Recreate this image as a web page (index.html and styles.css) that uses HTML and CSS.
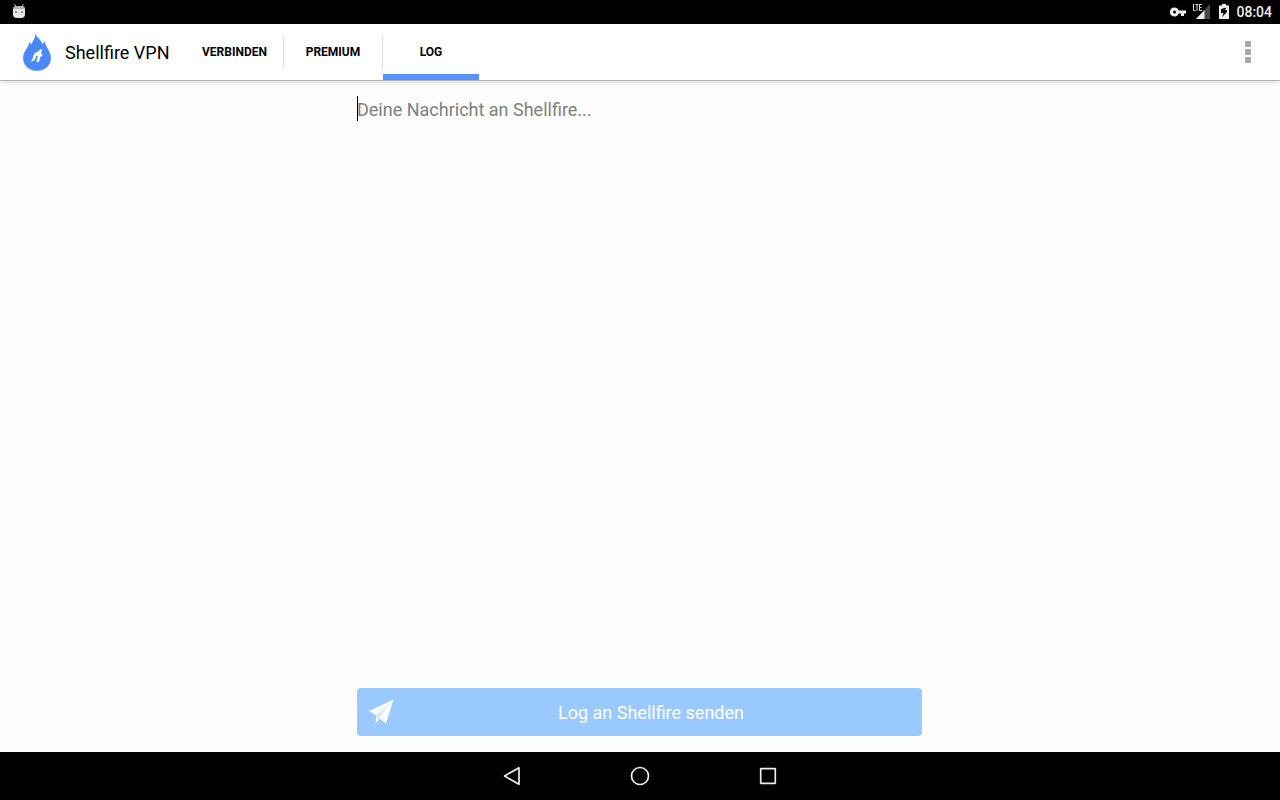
FILE: index.html
```html
<!DOCTYPE html>
<html lang="de">
<head>
<meta charset="utf-8">
<meta name="viewport" content="width=device-width, initial-scale=1">
<title>Shellfire VPN</title>
<link rel="stylesheet" href="styles.css">
</head>
<body>
<div class="status-bar">
  <svg class="status-icon" width="14" height="16" viewBox="0 0 14 16" aria-hidden="true">
    <path d="M2.6 1 4.2 4M11.4 1 9.8 4" stroke="#a8a8a8" stroke-width="1" fill="none"/>
    <path d="M1 6.2C1 4 2 3 4 3h6c2 0 3 1 3 3.200z" fill="#b4b4b4"/>
    <path d="M1 6h12v5.500c0 2-1.500 3.500-3.500 3.500h-5C2.500 15 1 13.500 1 11.500z" fill="#e6e6e6"/>
    <circle cx="4" cy="9" r=".8" fill="#222"/><circle cx="10" cy="9" r=".8" fill="#222"/>
  </svg>
  <div class="status-icons">
    <svg width="16" height="10" viewBox="0 0 16 10" aria-hidden="true">
      <path fill="#eee" fill-rule="evenodd" d="M4.500.5a4.500 4.500 0 1 0 4.200 6H11V9h3V6.500h2v-3H8.700A4.500 4.500 0 0 0 4.500.5zm0 3a1.500 1.500 0 1 1 0 3 1.500 1.500 0 0 1 0-3z"/>
    </svg>
    <svg class="status-icon" width="20" height="16" viewBox="0 0 20 16" aria-hidden="true">
      <path d="M18 1v15H4z" fill="#484848"/><path d="M12.500 7v9H4z" fill="#eee"/>
      <path d="M0 0h10.500v8.500H0z" fill="#000"/>
      <path d="M1.500 1v6.500h2M3.500 1.500h3M5 1.500V8M10 1.500H7.500v6H10M7.500 4.500h2" fill="none" stroke="#ddd" stroke-width="1"/>
    </svg>
    <svg class="status-icon" width="12" height="15" viewBox="0 0 12 15" aria-hidden="true">
      <path d="M4 0h4v1.500h3V15H1V1.500h3z" fill="#eee"/><path d="M8.500 3.500 3 5v4h2.500L4 13l5-5V6H7z" fill="#000"/>
    </svg>
    <time class="clock">08:04</time>
  </div>
</div>

<header class="action-bar">
  <svg class="logo" width="30" height="38" viewBox="0 0 30 38" aria-hidden="true">
    <path d="M13.500 1c-.5 5-3 7.200-4 10.500L7.300 8.300C7.300 14 1 17.500 1 24.500 1 32 7 37.300 15 37.300S29 32 29 24.500c0-7-5.600-10.500-6.300-17l-2.500 3.200C19.500 6 15.500 5 13.500 1z" fill="#b9c0cc"/>
    <path d="M13.500 0c-.5 5-3 7.200-4 10.500L7.300 7.800C7.300 13.500 1.300 17 1.300 23.500 1.300 31 7 36.500 15 36.500s13.700-5.500 13.700-13c0-7-5.300-10-6-16.300l-2.500 3.300C19.500 6 15.500 4.500 13.500 0z" fill="#4988fa"/>
    <path d="M8.300 27.500c1.700-.8 2.200-2 2.700-4.200.7-3.200 2-5.300 5-5.500 1-2 2.300-2.800 4.300-2.500l-.6 2-.7 2.900h1.500l-.6 2.200h-1.500L17 28h-2.800l1.600-6.200h-1.600c-.8 3.800-2.400 6.200-5.900 5.700z" fill="#fff"/>
  </svg>
  <h1 class="title">Shellfire VPN</h1>
  <nav class="tabs">
    <a class="tab" href="#verbinden">VERBINDEN</a>
    <a class="tab" href="#premium">PREMIUM</a>
    <a class="tab tab-active" href="#log" aria-current="page">LOG</a>
  </nav>
  <button class="overflow" type="button" aria-label="Weitere Optionen">
    <svg width="6" height="22" viewBox="0 0 6 22" aria-hidden="true"><path d="M0 0h6v6H0zM0 8h6v6H0zM0 16h6v6H0z" fill="#aaa"/></svg>
  </button>
</header>

<main class="content">
  <form class="log-form">
    <div class="message">
      <textarea class="message-input" aria-label="Nachricht" placeholder="Deine Nachricht an Shellfire..."></textarea>
      <span class="caret"></span>
    </div>
    <button class="send" type="button">
      <svg width="26" height="26" viewBox="0 0 26 26" aria-hidden="true">
        <path d="M25.500.5 18 24.500 10.500 18.500 22 4.500 8.300 16.500 1 12zM8.300 17.500 11.500 20.500 7.500 24z" fill="#fff"/>
        <path d="M22 4.500 8.300 16.500v2l2.200 0z" fill="#fff" fill-opacity=".6"/>
      </svg>
      <span class="send-label">Log an Shellfire senden</span>
    </button>
  </form>
</main>

<nav class="system-nav" aria-label="System">
  <button class="system-button" type="button" aria-label="Zurück"><svg width="20" height="20" viewBox="0 0 20 20"><path d="M17 1.800v16.400L2.500 10z"/></svg></button>
  <button class="system-button" type="button" aria-label="Startseite"><svg width="20" height="20" viewBox="0 0 20 20"><circle cx="10" cy="10" r="8.500"/></svg></button>
  <button class="system-button" type="button" aria-label="Übersicht"><svg width="20" height="20" viewBox="0 0 20 20"><rect x="2.700" y="2.700" width="14.600" height="14.600" rx=".5"/></svg></button>
</nav>
</body>
</html>
```
FILE: styles.css
```css
* {
  box-sizing: border-box;
}

body {
  display: flex;
  flex-direction: column;
  min-height: 100vh;
  margin: 0;
  background: #fefefe;
  color: #000;
  font-family: Roboto, "Liberation Sans", sans-serif;
}

svg {
  display: block;
  flex: none;
}

button {
  border: 0;
  background: none;
  font: inherit;
  cursor: pointer;
}

.status-bar {
  display: flex;
  align-items: center;
  justify-content: space-between;
  height: 24px;
  padding: 0 8px 0 12px;
  background: #000;
}

.status-icon {
  margin-bottom: 2px;
}

.status-icons {
  display: flex;
  align-items: center;
  gap: 6px;
}

.clock {
  color: #eee;
  font-size: 14px;
  font-weight: 500;
  line-height: 24px;
}

.action-bar {
  display: flex;
  align-items: center;
  height: 57px;
  padding: 0 16px 0 22px;
  border-bottom: 1px solid #b4b4b4;
  background: #fff;
  box-shadow: 0 1px 5px rgba(0, 0, 0, 0.16);
}

.logo {
  margin-top: 2px;
}

.title {
  margin: 0 16px 0 13px;
  padding-top: 2px;
  font-size: 18px;
  font-weight: 400;
  line-height: 24px;
}

.tabs {
  display: flex;
  align-self: stretch;
}

.tab {
  position: relative;
  display: flex;
  align-items: center;
  justify-content: center;
  min-width: 98px;
  padding: 0 16px;
  color: #000;
  font-size: 12px;
  font-weight: 700;
  text-decoration: none;
}

.tab + .tab {
  min-width: 99px;
}

.tab + .tab-active {
  min-width: 97px;
}

.tab + .tab::before {
  content: "";
  position: absolute;
  top: 12px;
  bottom: 12px;
  left: 0;
  width: 1px;
  background: #ddd;
}

.tab-active::after {
  content: "";
  position: absolute;
  right: 0;
  bottom: 0;
  left: 1px;
  height: 6px;
  background: #5890ff;
}

.overflow {
  display: flex;
  align-items: center;
  justify-content: center;
  width: 32px;
  height: 48px;
  margin-left: auto;
  padding: 0;
}

.content {
  display: flex;
  flex: 1;
  justify-content: center;
  padding: 15px 16px 16px 15px;
}

.log-form {
  display: flex;
  flex: 1;
  flex-direction: column;
  gap: 16px;
  max-width: 565px;
}

.message {
  position: relative;
  display: flex;
  flex: 1;
}

.message-input {
  flex: 1;
  min-width: 0;
  padding: 2px 0;
  border: 0;
  outline: 0;
  background: none;
  color: #000;
  font: inherit;
  font-size: 18px;
  line-height: 24px;
  resize: none;
}

.message-input::placeholder {
  color: #808080;
}

.caret {
  position: absolute;
  top: 0;
  left: 0;
  width: 1px;
  height: 25px;
  background: #000;
}

.send {
  display: flex;
  align-items: center;
  min-height: 48px;
  padding: 0 14px 0 11px;
  border-radius: 4px;
  background: #99c9ff;
  color: #fff;
  font-size: 18px;
  line-height: 24px;
}

.send-label {
  flex: 1;
  padding-top: 2px;
  text-align: center;
}

.system-nav {
  display: flex;
  justify-content: center;
  height: 48px;
  background: #000;
}

.system-button {
  display: flex;
  align-items: center;
  justify-content: center;
  width: 128px;
  padding: 0;
  fill: none;
  stroke: #eee;
  stroke-width: 1.7px;
  stroke-linejoin: round;
}
```
